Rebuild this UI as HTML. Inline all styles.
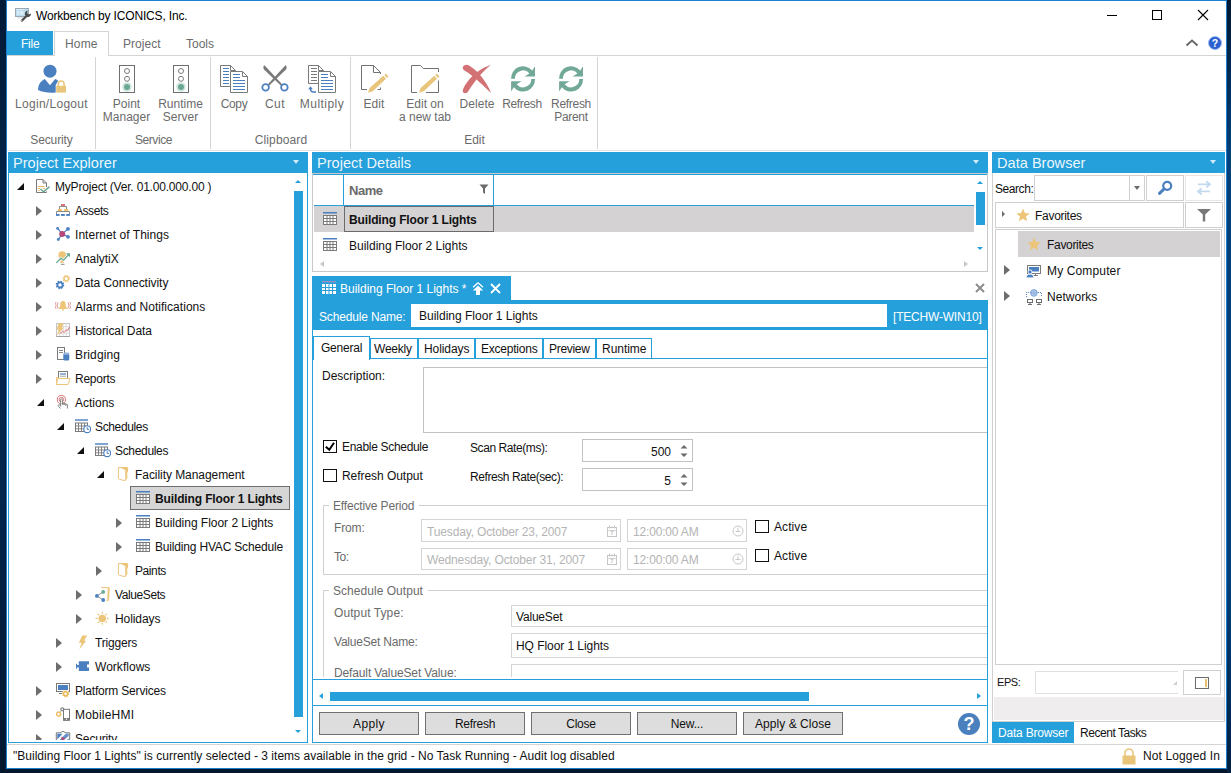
<!DOCTYPE html>
<html>
<head>
<meta charset="utf-8">
<title>Workbench</title>
<style>
*{box-sizing:border-box;margin:0;padding:0}
html,body{width:1231px;height:773px;overflow:hidden;background:#02162e;font-family:"Liberation Sans",sans-serif;font-size:12px;color:#111}
.a{position:absolute}
.t{position:absolute;white-space:nowrap;line-height:14px}
#win{position:absolute;left:6px;top:0;width:1221px;height:769px;background:#fff;border:1px solid #1c7fd0;overflow:hidden}
/* inside #win coordinates are offset: left -7, top -1 */
#o{position:absolute;left:-7px;top:-1px;width:1231px;height:773px}
.blue{background:#26a0da}
.rl{color:#6b6b6b;font-size:12px;text-align:center;line-height:13px}
.sep{position:absolute;width:1px;background:#d4d4d4;top:57px;height:92px}
.hdr{position:absolute;height:21px;top:152px;background:#26a0da;color:rgba(255,255,255,0.93);font-size:14.6px;line-height:23px;padding-left:5px;white-space:nowrap;overflow:hidden}
.dd{position:absolute;top:160px;width:0;height:0;border-left:3.5px solid transparent;border-right:3.5px solid transparent;border-top:4px solid #cfe9f7}
.pn{position:absolute;background:#fff;border:1px solid #26a0da}
.tr{position:absolute;white-space:nowrap;font-size:12px;line-height:14px;color:#111}
.ex{position:absolute;width:0;height:0;border-top:5px solid transparent;border-bottom:5px solid transparent;border-left:6px solid #6d6d6d}
.co{position:absolute;width:0;height:0;border-bottom:7px solid #111;border-left:7px solid transparent}
.btn{position:absolute;top:712px;height:23px;width:101px;background:#dddddd;border:1px solid #707070;text-align:center;font-size:12px;line-height:22px;color:#111}
.inp{position:absolute;background:#fff;border:1px solid #ababab}
.g{color:#6b6b6b}
</style>
</head>
<body>
<!--DEFS-->
<svg width="0" height="0" style="position:absolute">
<defs>
<symbol id="i-table" viewBox="0 0 16 16"><rect x="1" y="0" width="14" height="1.500" fill="#4a7fc0"/><rect x="1.500" y="3.500" width="13" height="9" fill="#fff" stroke="#7a7a7a"/><path d="M1.500 6.500H14.500M1.500 9.500H14.500M5 3.500V12.500M8 3.500V12.500M11 3.500V12.500" stroke="#7a7a7a" stroke-width="1"/></symbol>
<symbol id="i-tablew" viewBox="0 0 16 14"><rect x="1" y="0" width="14" height="1.300" fill="#9b8fc6"/><rect x="1" y="3" width="14" height="10" fill="#fff"/><path d="M1 6.500H15M1 9.500H15M4.500 3V13M8 3V13M11.500 3V13" stroke="#26a0da" stroke-width="1"/></symbol>
<symbol id="i-star" viewBox="0 0 14 14"><path d="M7 0.500L8.900 5L13.700 5.400L10 8.500L11.200 13.300L7 10.700L2.800 13.300L4 8.500L0.300 5.400L5.100 5Z" fill="#ecc579"/></symbol>
<symbol id="i-cal" viewBox="0 0 10 12"><rect x="0.500" y="2.500" width="9" height="9" fill="none" stroke="#c6c6c6"/><path d="M0.500 5.500H9.500" stroke="#d2d2d2"/><path d="M2.500 0.500V3.500M7.500 0.500V3.500M5 1.200V3.200" stroke="#c6c6c6"/><text x="5" y="10.300" font-size="6" font-weight="bold" fill="#c4c4c4" text-anchor="middle" font-family="Liberation Sans">7</text></symbol>
<symbol id="i-clk" viewBox="0 0 12 12"><circle cx="6" cy="6" r="5" fill="none" stroke="#c8c8c8"/><path d="M6 2.500V6.500M3.500 6.500H8.500" stroke="#c8c8c8" fill="none"/></symbol>
<symbol id="r-login" viewBox="0 0 32 32"><circle cx="14" cy="8.200" r="6.500" fill="#4a7fc0"/><path d="M2 27 C2.500 20.500 5 18 8.800 16 L14 22.300 L19.200 16 C20.500 16.500 21.500 17 22.200 17.800 L19.700 22 V29.400 C14 30 7 29.500 2 27Z" fill="#4a7fc0"/><path d="M22.300 23 V21 a2.900 2.900 0 0 1 5.800 0 V23" stroke="#e8c57a" stroke-width="1.500" fill="none"/><rect x="20.200" y="22.800" width="9.800" height="6.800" fill="#e8c57a"/></symbol>
<symbol id="r-light" viewBox="0 0 32 32"><rect x="8.500" y="2.500" width="15" height="27" fill="#fff" stroke="#6b6f6f" stroke-width="1"/><circle cx="16" cy="8" r="2.500" fill="#fff" stroke="#7a7a7a" stroke-width="1"/><circle cx="16" cy="15.800" r="2.500" fill="#fff" stroke="#7a7a7a" stroke-width="1"/><circle cx="16" cy="24" r="4.800" fill="#d3e6de"/><circle cx="16" cy="24" r="3" fill="#6aa893"/></symbol>
<symbol id="r-copy" viewBox="0 0 32 32"><path d="M2.500 2.500H12.500L17.500 7.500V23.500H2.500Z" fill="#fff" stroke="#7a7a7a"/><path d="M12.500 2.500V7.500H17.500" fill="none" stroke="#7a7a7a"/><path d="M5 5.500H11M5 8.500H11M5 11.500H11M5 14.500H11M5 17.500H11M5 20.500H11" stroke="#4a7fc0" stroke-width="1"/><path d="M12.500 8.500H24.500L29.500 13.500V29.500H12.500Z" fill="#fff" stroke="#7a7a7a"/><path d="M24.500 8.500V13.500H29.500" fill="none" stroke="#7a7a7a"/><path d="M15 11.500H22M15 14.500H22M15 17.500H27M15 20.500H27M15 23.500H27M15 26.500H27" stroke="#4a7fc0" stroke-width="1"/></symbol>
<symbol id="r-multiply" viewBox="0 0 32 32"><path d="M2.500 2.500H12.500L17.500 7.500V20.500H2.500Z" fill="#fff" stroke="#7a7a7a"/><path d="M12.500 2.500V7.500H17.500" fill="none" stroke="#7a7a7a"/><path d="M5 5.500H11M5 8.500H11M5 11.500H11M5 14.500H11M5 17.500H11" stroke="#7a7a7a" stroke-width="1"/><path d="M12.500 8.500H24.500L29.500 13.500V29.500H12.500Z" fill="#fff" stroke="#7a7a7a"/><path d="M24.500 8.500V13.500H29.500" fill="none" stroke="#7a7a7a"/><path d="M15 11.500H22M15 14.500H22M15 17.500H27M15 20.500H27M15 23.500H27M15 26.500H27" stroke="#4a7fc0" stroke-width="1"/><path d="M10 29H7.500A3 3 0 0 1 4.500 26V25" fill="none" stroke="#4a7fc0" stroke-width="1.400"/><path d="M2.200 26.300L4.500 23.300L6.800 26.300Z" fill="#4a7fc0"/></symbol>
<symbol id="r-cut" viewBox="0 0 32 32"><path d="M4.500 3.500C4.800 2.500 5.500 2.300 5.500 2.300L23.300 21.600L22 22.700L5 6.500C4.300 5.500 4.300 4.500 4.500 3.500Z" fill="#7a7a7a"/><path d="M27.500 3.500C27.200 2.500 26.500 2.300 26.500 2.300L8.700 21.600L10 22.700L27 6.500C27.700 5.500 27.700 4.500 27.500 3.500Z" fill="#7a7a7a"/><circle cx="6.600" cy="24.400" r="3.300" fill="#fff" stroke="#4a7fc0" stroke-width="1.700"/><circle cx="25.400" cy="24.400" r="3.300" fill="#fff" stroke="#4a7fc0" stroke-width="1.700"/></symbol>
<symbol id="r-edit" viewBox="0 0 32 32"><path d="M9 26.500H3.500V2.500H15.500L22.500 9.500V11M22.500 24.500V26.500H19.500" fill="none" stroke="#6e7272" stroke-width="1"/><path d="M15.500 2.500V9.500H22.500" fill="none" stroke="#6e7272"/><path d="M10 29.700L11.600 25L25.300 12.800L28 15.800L14.800 28.200Z" fill="#e8c57a"/><path d="M26.300 11.900L27.800 10.500L30.500 13.500L29 14.900Z" fill="#e8c57a"/></symbol>
<symbol id="r-edittab" viewBox="0 0 32 32"><path d="M8 29.500H2.500V2.500H11.500L14.300 5.500H29.500V9M29.500 17.500V29.500H17" fill="none" stroke="#6e7272" stroke-width="1"/><path d="M10 29.700L11.600 25L25.300 12.800L28 15.800L14.800 28.200Z" fill="#e8c57a"/><path d="M26.300 11.900L27.800 10.500L30.500 13.500L29 14.900Z" fill="#e8c57a"/></symbol>
<symbol id="r-delete" viewBox="0 0 32 32"><path d="M1.800 4.500C2.500 1.500 6 1.200 8.500 2.800C17 8 25 18 30.200 30C23 23.500 13 13 3.500 7.500C2.300 6.800 1.600 5.500 1.800 4.500Z" fill="#d37274"/><path d="M30 1.800C22 4.500 12.500 10.500 7 18C3.500 22.500 1.500 26.500 1.800 28.500C2.200 30.500 5 30.800 6.800 29C10.500 23.500 18.500 10.500 30 1.800Z" fill="#d37274"/></symbol>
<symbol id="r-refresh" viewBox="0 0 32 32"><path d="M4.100 15.800A12 12 0 0 1 25.300 7.600L28 3.200V13.600H17.600L22.500 10.500A8.300 8.300 0 0 0 7.800 15.800Z" fill="#72a898"/><path d="M28 16A12 12 0 0 1 6.800 24.200L4.100 28.600V18.200H14.500L9.600 21.300A8.300 8.300 0 0 0 24.300 16Z" fill="#72a898"/></symbol>
<symbol id="i-app" viewBox="0 0 20 18"><rect x="3" y="11" width="6" height="1.500" fill="#e4e8ec"/><rect x="1.500" y="2.500" width="13" height="8" fill="#b9dcf0" stroke="#9aa9b4" stroke-width="1"/><rect x="2.200" y="3.200" width="8" height="0.800" fill="#e4f1f9"/><rect x="3" y="5" width="2.200" height="3.800" fill="#dcecf6"/><rect x="6" y="5" width="3.600" height="3.800" fill="#dcecf6"/><path d="M7.800 14.700L13 9.500" stroke="#4d4d4d" stroke-width="2.300" stroke-linecap="round"/><circle cx="7.700" cy="14.800" r="0.600" fill="#fff"/><path d="M11 9C10.300 7 11.500 4.800 13.600 4.400L13.200 7.200L14.800 8.600L17 7.600C17.200 9.800 15.600 11.300 13.500 11.200Z" fill="#4d4d4d"/></symbol>
<symbol id="i-proj" viewBox="0 0 16 16"><path d="M1.500 0.500H8L11.500 4V8M11.500 12.500V13.500H1.500V0.500" fill="#fff" stroke="#7a7a7a"/><path d="M8 0.500V4H11.500" fill="none" stroke="#7a7a7a"/><path d="M3 7.500H9.500M3 9.500H5M8 9.500H10M3 11.500H4.500" stroke="#e8b860" stroke-width="1"/><path d="M5.400 10L8.600 12.800L14.500 7.600" fill="none" stroke="#6aa893" stroke-width="1.500"/></symbol>
<symbol id="i-assets" viewBox="0 0 16 16"><rect x="6" y="1.100" width="4" height="1.800" fill="#d9666b"/><path d="M4.500 6V3.500H11.500V6M1.500 11V8.500H14.500V11" fill="none" stroke="#8a8a8a"/><rect x="2.800" y="6.100" width="4" height="1.800" fill="#ecb957"/><rect x="9.200" y="6.100" width="4" height="1.800" fill="#ecb957"/><rect x="1" y="11" width="3.600" height="1.900" fill="#4a7fc0"/><rect x="6" y="11" width="3.800" height="1.900" fill="#4a7fc0"/><rect x="11.200" y="11" width="3.700" height="1.900" fill="#4a7fc0"/></symbol>
<symbol id="i-iot" viewBox="0 0 16 16"><path d="M2.600 1.400L7.200 6.900L13 1.900M7.200 6.900L13 9.800M7.200 6.900L3.300 12.500" stroke="#4a7fc0" stroke-width="1.200" fill="none"/><circle cx="2.600" cy="1.400" r="1.400" fill="#4a7fc0"/><circle cx="13" cy="1.900" r="1.900" fill="#4a7fc0"/><circle cx="13" cy="9.800" r="1.900" fill="#4a7fc0"/><circle cx="3.300" cy="12.500" r="1.400" fill="#4a7fc0"/><circle cx="7.200" cy="6.900" r="3" fill="#b5477a"/></symbol>
<symbol id="i-analytix" viewBox="0 0 16 16"><circle cx="7.200" cy="4" r="3.800" fill="#ecc579"/><path d="M5.300 6H9.100L8.800 12H5.600Z" fill="#ecc579"/><rect x="6" y="12.800" width="3.500" height="1" fill="#8a8a8a"/><path d="M1.300 11.900L5.900 7.200L8.600 9.200L13.800 3.200" fill="none" stroke="#fff" stroke-width="2.600"/><path d="M1.300 11.900L5.900 7.200L8.600 9.200L13.800 3.200" fill="none" stroke="#6aa893" stroke-width="1.300"/><path d="M11 2.300H15V6.300Z" fill="#6aa893"/></symbol>
<symbol id="i-datacon" viewBox="0 0 16 16"><circle cx="5" cy="9.900" r="2.600" fill="none" stroke="#4a7fc0" stroke-width="1.800"/><circle cx="5" cy="9.900" r="3.600" fill="none" stroke="#4a7fc0" stroke-width="1.400" stroke-dasharray="1.500 1.330"/><circle cx="11.300" cy="3.600" r="2.200" fill="none" stroke="#ecc579" stroke-width="1.300"/><circle cx="11.300" cy="3.600" r="3.100" fill="none" stroke="#ecc579" stroke-width="1.200" stroke-dasharray="1.300 1.130"/></symbol>
<symbol id="i-alarm" viewBox="0 0 16 16"><path d="M8 2C5.800 2 5.300 4 5.300 5.500C5.300 7.500 4.500 8.500 3.600 9.300V10H12.400V9.300C11.500 8.500 10.700 7.500 10.700 5.500C10.700 4 10.200 2 8 2Z" fill="#ecc579"/><rect x="7" y="10.300" width="2" height="1.200" fill="#ecc579"/><path d="M3.200 3.600C1.700 5.200 1.700 7.600 3.200 9.200M1.200 3C-0.600 5 -0.600 7.800 1.200 9.800M12.800 3.600C14.300 5.200 14.300 7.600 12.800 9.200M14.800 3C16.600 5 16.600 7.800 14.800 9.800" fill="none" stroke="#dd8386" stroke-width="1"/></symbol>
<symbol id="i-hist" viewBox="0 0 16 16"><rect x="1.500" y="0.500" width="13" height="13" fill="#fff" stroke="#c4c4c4"/><path d="M1.500 3.700H14.500M1.500 7H14.500M1.500 10.200H14.500M4.700 0.500V13.500M8 0.500V13.500M11.200 0.500V13.500" stroke="#d4d4d4" stroke-width="0.800"/><path d="M1.500 13.500H14.500" fill="none" stroke="#a0a0a0"/><path d="M3.800 0.300H8.800L6.500 4.500H9L1.800 12.600L4 6.500H1.600Z" fill="#ecc579"/><path d="M5 10.500L7.500 8.500L9.500 9.200L11.500 7L12.500 7.500L14.500 4" fill="none" stroke="#d9666b" stroke-width="0.900"/></symbol>
<symbol id="i-bridge" viewBox="0 0 16 16"><rect x="2.500" y="0.500" width="7" height="12" fill="#fff" stroke="#7a7a7a"/><path d="M4 3.500H8M4 5.500H8" stroke="#8a8a8a" stroke-width="1"/><rect x="8.300" y="6.500" width="6" height="7" rx="1.500" fill="#4a7fc0"/><ellipse cx="11.300" cy="6.800" rx="3" ry="1.200" fill="#8fb0dc"/></symbol>
<symbol id="i-reports" viewBox="0 0 16 16"><rect x="3.500" y="0.500" width="9" height="8" fill="#fff" stroke="#7a7a7a"/><path d="M5 3H11" stroke="#4a7fc0" stroke-width="1.200"/><path d="M5 5.200H11" stroke="#9a9a9a" stroke-width="0.900"/><path d="M1.500 13.500V6.500H3.500" fill="none" stroke="#ecc579"/><path d="M3 7.500H15L13 13.500H1.200Z" fill="#fff" stroke="#ecc579" stroke-width="1"/></symbol>
<symbol id="i-actions" viewBox="0 0 16 16"><circle cx="6.400" cy="4.600" r="4.100" fill="none" stroke="#d9666b" stroke-width="0.900"/><circle cx="6.400" cy="4.600" r="2.200" fill="none" stroke="#d9666b" stroke-width="0.900"/><path d="M5.600 11.500V4.800a0.900 0.900 0 0 1 1.800 0V9.500" fill="#fff" stroke="#7a7a7a" stroke-width="0.900"/><path d="M7.400 9.800V8.600a0.800 0.800 0 0 1 1.700 0V10M9.100 10V9.300a0.800 0.800 0 0 1 1.700 0V10.500M10.800 10.500V10a0.800 0.800 0 0 1 1.600 0V13.500M5.600 10.500L4.200 9.800C3.300 9.500 2.700 10.600 3.500 11.300L5.500 13.500" fill="none" stroke="#7a7a7a" stroke-width="0.900"/></symbol>
<symbol id="i-sched" viewBox="0 0 16 16"><rect x="0" y="0.300" width="13" height="1.400" fill="#4a7fc0"/><rect x="0.500" y="4" width="12" height="8.500" fill="#fff" stroke="#7a7a7a"/><path d="M0.500 7H12.500M0.500 9.800H12.500M3.500 4V12.500M6.500 4V12.500M9.500 4V12.500" stroke="#7a7a7a" stroke-width="0.900"/><circle cx="12.200" cy="10.200" r="3.400" fill="#fff" stroke="#4a7fc0" stroke-width="1.100"/><path d="M12.200 8.200V10.400H14" fill="none" stroke="#4a7fc0" stroke-width="1"/></symbol>
<symbol id="i-folder" viewBox="0 0 16 16"><path d="M3.400 0.500H12.600V4.700H11.800V11.600L10.600 12V13.400L7.500 13.200L4.600 12.300L3.400 11.600Z" fill="#fff" stroke="#ecc579" stroke-width="1"/><path d="M6.500 0.500H12.600V4.700H11.800V11.600L10.200 12V3.400L9 2.200L6.500 1.600Z" fill="#ecc579"/></symbol>
<symbol id="i-valueset" viewBox="0 0 16 16"><path d="M5.900 0.600H14.200L13.600 13.200L11.800 13.800L12 12.700" fill="none" stroke="#ecc579" stroke-width="1"/><path d="M12.800 0.800L12.200 12.800L13.500 13L14.100 0.800Z" fill="#ecc579"/><path d="M8.200 4.900L1.900 8.900L8.200 13" fill="none" stroke="#8a8a8a" stroke-width="0.900"/><circle cx="1.900" cy="8.900" r="1.900" fill="#4a7fc0"/><circle cx="8.200" cy="4.900" r="1.900" fill="#6aa893"/><circle cx="8.200" cy="13" r="1.900" fill="#4a7fc0"/></symbol>
<symbol id="i-holiday" viewBox="0 0 16 16"><circle cx="7.300" cy="7.400" r="3.700" fill="#ecc579"/><path d="M7.300 0L8.100 2.800H6.500ZM7.300 14.800L8.100 12H6.500ZM-0.100 7.400L2.700 6.600V8.200ZM14.700 7.400L11.900 6.600V8.200ZM2.100 2.200L4.700 3.600L3.500 4.800ZM12.500 2.200L9.900 3.600L11.100 4.800ZM2.100 12.600L4.700 11.200L3.500 10ZM12.500 12.600L9.900 11.200L11.100 10Z" fill="#ecc579"/></symbol>
<symbol id="i-trigger" viewBox="0 0 16 16"><path d="M7.300 0.400H12.200L9 5.800H11.300L4.300 14.300L6.700 7.700H3.800Z" fill="#ecc579"/></symbol>
<symbol id="i-workflow" viewBox="0 0 16 16"><path d="M3.800 2.200H14V5.500H12V8.500H14V12H3.800Z" fill="#4a7fc0"/><rect x="1.200" y="6" width="3" height="2.400" fill="#4a7fc0"/><rect x="1" y="4.800" width="1" height="4.800" fill="#4a7fc0"/></symbol>
<symbol id="i-platform" viewBox="0 0 16 16"><rect x="1.500" y="0.500" width="13" height="8" fill="#fff" stroke="#7a7a7a"/><rect x="3" y="2" width="10" height="5" fill="#4a7fc0"/><path d="M4 10.500H7" stroke="#7a7a7a"/><circle cx="10.600" cy="10.800" r="3.600" fill="#fff"/><circle cx="10.600" cy="10.800" r="2" fill="none" stroke="#ecb957" stroke-width="1.400"/><circle cx="10.600" cy="10.800" r="3" fill="none" stroke="#ecb957" stroke-width="1.200" stroke-dasharray="1.200 1.150"/></symbol>
<symbol id="i-mobile" viewBox="0 0 16 16"><circle cx="7.300" cy="2.300" r="1.500" fill="#fff" stroke="#8a8a8a" stroke-width="1.300"/><path d="M5.600 3.800L4.800 5" stroke="#b0b0b0" stroke-width="0.900"/><rect x="8.500" y="2.300" width="6" height="11" fill="#fff" stroke="#7a7a7a"/><rect x="8.500" y="11" width="6" height="2.500" fill="#7a7a7a"/><circle cx="11.500" cy="12.200" r="0.700" fill="#fff"/><circle cx="3.600" cy="7.100" r="2" fill="#fff" stroke="#ecb957" stroke-width="1.200"/><path d="M3.600 4.300V5M3.600 9.200V9.900M0.800 7.100H1.500M5.700 7.100H6.400" stroke="#ecb957" stroke-width="1"/></symbol>
<symbol id="i-security" viewBox="0 0 16 16"><path d="M8 0.300C6 1.800 3.500 2 1.300 1.800V8C1.300 12 5 14.500 8 15.500C11 14.500 14.700 12 14.700 8V1.800C12.500 2 10 1.800 8 0.300Z" fill="#fff" stroke="#7a7a7a" stroke-width="1"/><path d="M2.300 2.800H7.500L2.300 8.500Z" fill="#4a7fc0"/><path d="M11 2.600L13.700 2.800V5L4.500 12.500L3 10.500Z" fill="#4a7fc0" opacity="0.850"/><path d="M13.700 7.500V9L10 12.500H8Z" fill="#4a7fc0"/><path d="M6.500 5.500L10.500 7.800L6.500 10Z" fill="#b5477a"/></symbol>
<symbol id="i-mycomp" viewBox="0 0 16 16"><rect x="1.500" y="1.500" width="13" height="8" fill="#fff" stroke="#7a7a7a"/><rect x="3" y="3" width="10" height="4.500" fill="#4a7fc0"/><path d="M9.500 9.500V11.500M7.500 11.500H12" stroke="#7a7a7a"/><circle cx="4" cy="7.900" r="2.400" fill="#fff"/><circle cx="4" cy="8" r="1.700" fill="#4a7fc0"/><path d="M0.300 13.700C0.300 11 2 10.200 4 10.200C6 10.200 7.700 11 7.700 13.700Z" fill="#4a7fc0" stroke="#fff" stroke-width="0.600"/></symbol>
<symbol id="i-network" viewBox="0 0 16 16"><path d="M0.600 8V3.500H15.600V8" fill="none" stroke="#4a7fc0" stroke-width="1" stroke-dasharray="1 1"/><circle cx="7.900" cy="3.900" r="3.400" fill="#b7cdec" stroke="#7ea3d8" stroke-width="0.800"/><path d="M4.600 3.900H11.200M7.900 0.600V7.200M6.200 1.100C5.500 2.900 5.500 4.900 6.200 6.700M9.600 1.100C10.300 2.900 10.300 4.900 9.600 6.700" stroke="#7ea3d8" stroke-width="0.600" fill="none"/><rect x="1.500" y="10.500" width="5" height="3" fill="#fff" stroke="#6e6e6e"/><rect x="10.500" y="10.500" width="5" height="3" fill="#fff" stroke="#6e6e6e"/><path d="M4 13.500V15.500M13 13.500V15.500M2 15.500H6M11 15.500H15" stroke="#6e6e6e"/></symbol>
</defs>
</svg>
<!--/DEFS-->
<div class="a" style="left:0;top:0;width:6px;height:773px;background:linear-gradient(to bottom,#021a36 0%,#032850 35%,#03264c 65%,#02162e 100%)"></div>
<div class="a" style="left:5px;top:0;width:1px;height:773px;background:#021c3a"></div>
<div class="a" style="left:1227px;top:0;width:4px;height:773px;background:linear-gradient(to bottom,#02182f 0%,#04407a 20%,#04407a 75%,#02203f 100%)"></div>
<div id="win"><div id="o">

<!-- TITLE BAR -->
<div class="t" style="left:36px;top:9px;font-size:12px;color:#000;letter-spacing:-0.17px">Workbench by ICONICS, Inc.</div>

<!-- RIBBON TABS -->
<div class="a blue" style="left:7px;top:31px;width:46px;height:24px"></div>
<div class="t" style="left:21px;top:37px;color:#fff;font-size:12px;letter-spacing:-0.25px">File</div>
<div class="a" style="left:7px;top:55px;width:1220px;height:1px;background:#d4d4d4"></div>
<div class="a" style="left:54px;top:31px;width:55px;height:25px;background:#fff;border:1px solid #d4d4d4;border-bottom:none"></div>
<div class="t g" style="left:65px;top:37px;font-size:12px;letter-spacing:0.16px">Home</div>
<div class="t g" style="left:123px;top:37px;font-size:12px;letter-spacing:0.04px">Project</div>
<div class="t g" style="left:186px;top:37px;font-size:12px;letter-spacing:-0.0px">Tools</div>

<!--RIB-->
<!-- window controls -->
<div class="a" style="left:1107px;top:15px;width:10px;height:1px;background:#000"></div>
<div class="a" style="left:1152px;top:10px;width:10px;height:10px;border:1px solid #000"></div>
<svg class="a" style="left:1197px;top:9px" width="12" height="12" viewBox="0 0 12 12"><path d="M1 1L11 11M11 1L1 11" stroke="#000" stroke-width="1.1" fill="none"/></svg>
<svg class="a" style="left:1185px;top:39px" width="14" height="8" viewBox="0 0 14 8"><path d="M1.500 6.500L7 1.500L12.500 6.500" stroke="#6b6b6b" stroke-width="2" fill="none"/></svg>
<svg class="a" style="left:1208px;top:36px" width="14" height="14" viewBox="0 0 14 14"><circle cx="7" cy="7" r="6.500" fill="#2a5fd0" stroke="#9db8ee" stroke-width="1"/><text x="7" y="11" font-family="Liberation Sans" font-size="10.500" font-weight="bold" fill="#fff" text-anchor="middle">?</text></svg>
<svg class="a" style="left:14px;top:6px" width="20" height="18" viewBox="0 0 20 18"><use href="#i-app"/></svg>
<!-- ribbon buttons -->
<svg class="a" style="left:36px;top:63px" width="32" height="32" viewBox="0 0 32 32"><use href="#r-login"/></svg>
<div class="t rl" style="left:7px;top:98px;width:89px;letter-spacing:0.29px">Login/Logout</div>
<div class="t rl" style="left:7px;top:134px;width:89px;letter-spacing:-0.11px">Security</div>
<svg class="a" style="left:111px;top:63px" width="32" height="32" viewBox="0 0 32 32"><use href="#r-light"/></svg>
<div class="t rl" style="left:96px;top:98px;width:61px">Point<br>Manager</div>
<svg class="a" style="left:165px;top:63px" width="32" height="32" viewBox="0 0 32 32"><use href="#r-light"/></svg>
<div class="t rl" style="left:150px;top:98px;width:61px">Runtime<br>Server</div>
<div class="t rl" style="left:96px;top:134px;width:115px;letter-spacing:-0.4px">Service</div>
<svg class="a" style="left:218px;top:63px" width="32" height="32" viewBox="0 0 32 32"><use href="#r-copy"/></svg>
<div class="t rl" style="left:211px;top:98px;width:46px;letter-spacing:-0.34px">Copy</div>
<svg class="a" style="left:259px;top:63px" width="32" height="32" viewBox="0 0 32 32"><use href="#r-cut"/></svg>
<div class="t rl" style="left:252px;top:98px;width:46px;letter-spacing:0.45px">Cut</div>
<svg class="a" style="left:306px;top:63px" width="32" height="32" viewBox="0 0 32 32"><use href="#r-multiply"/></svg>
<div class="t rl" style="left:292px;top:98px;width:60px;letter-spacing:0.45px">Multiply</div>
<div class="t rl" style="left:211px;top:134px;width:140px;letter-spacing:0.12px">Clipboard</div>
<svg class="a" style="left:358px;top:63px" width="32" height="32" viewBox="0 0 32 32"><use href="#r-edit"/></svg>
<div class="t rl" style="left:351px;top:98px;width:46px;letter-spacing:0.1px">Edit</div>
<svg class="a" style="left:409px;top:63px" width="32" height="32" viewBox="0 0 32 32"><use href="#r-edittab"/></svg>
<div class="t rl" style="left:392px;top:98px;width:66px">Edit on<br>a new tab</div>
<svg class="a" style="left:461px;top:63px" width="32" height="32" viewBox="0 0 32 32"><use href="#r-delete"/></svg>
<div class="t rl" style="left:452px;top:98px;width:50px;letter-spacing:0.06px">Delete</div>
<svg class="a" style="left:507px;top:63px" width="32" height="32" viewBox="0 0 32 32"><use href="#r-refresh"/></svg>
<div class="t rl" style="left:495px;top:98px;width:54px;letter-spacing:-0.34px">Refresh</div>
<svg class="a" style="left:555px;top:63px" width="32" height="32" viewBox="0 0 32 32"><use href="#r-refresh"/></svg>
<div class="t rl" style="left:543px;top:98px;width:56px;letter-spacing:-0.3px">Refresh<br>Parent</div>
<div class="t rl" style="left:351px;top:134px;width:247px;letter-spacing:0.0px">Edit</div>
<!--/RIB-->
<!-- RIBBON -->
<div class="sep" style="left:95px"></div>
<div class="sep" style="left:210px"></div>
<div class="sep" style="left:350px"></div>
<div class="sep" style="left:597px"></div>
<div class="a" style="left:7px;top:150px;width:1220px;height:1px;background:#e4e4e4"></div>

<!-- PANEL HEADERS -->
<div class="hdr" style="left:8px;width:300px">Project Explorer</div>
<div class="hdr" style="left:312px;width:676px">Project Details</div>
<div class="hdr" style="left:992px;width:233px">Data Browser</div>
<div class="dd" style="left:293px"></div><div class="dd" style="left:973px"></div><div class="dd" style="left:1210px"></div>

<!--TREE-->
<!-- PROJECT EXPLORER -->
<div class="pn" style="left:8px;top:173px;width:300px;height:570px;overflow:hidden;border-top:none"><div class="a" style="left:-9px;top:-173px;width:320px;height:760px">
<div class="co" style="left:17px;top:183px"></div>
<svg class="a" style="left:35px;top:179px" width="16" height="16" viewBox="0 0 16 16"><use href="#i-proj"/></svg>
<div class="tr" style="left:55px;top:180px;letter-spacing:-0.19px">MyProject (Ver. 01.00.000.00 )</div>
<div class="ex" style="left:36px;top:206px"></div>
<svg class="a" style="left:55px;top:203px" width="16" height="16" viewBox="0 0 16 16"><use href="#i-assets"/></svg>
<div class="tr" style="left:75px;top:204px;letter-spacing:-0.45px">Assets</div>
<div class="ex" style="left:36px;top:230px"></div>
<svg class="a" style="left:55px;top:227px" width="16" height="16" viewBox="0 0 16 16"><use href="#i-iot"/></svg>
<div class="tr" style="left:75px;top:228px;letter-spacing:0.05px">Internet of Things</div>
<div class="ex" style="left:36px;top:254px"></div>
<svg class="a" style="left:55px;top:251px" width="16" height="16" viewBox="0 0 16 16"><use href="#i-analytix"/></svg>
<div class="tr" style="left:75px;top:252px;letter-spacing:-0.05px">AnalytiX</div>
<div class="ex" style="left:36px;top:278px"></div>
<svg class="a" style="left:55px;top:275px" width="16" height="16" viewBox="0 0 16 16"><use href="#i-datacon"/></svg>
<div class="tr" style="left:75px;top:276px;letter-spacing:-0.04px">Data Connectivity</div>
<div class="ex" style="left:36px;top:302px"></div>
<svg class="a" style="left:55px;top:299px" width="16" height="16" viewBox="0 0 16 16"><use href="#i-alarm"/></svg>
<div class="tr" style="left:75px;top:300px;letter-spacing:0.04px">Alarms and Notifications</div>
<div class="ex" style="left:36px;top:326px"></div>
<svg class="a" style="left:55px;top:323px" width="16" height="16" viewBox="0 0 16 16"><use href="#i-hist"/></svg>
<div class="tr" style="left:75px;top:324px;letter-spacing:-0.08px">Historical Data</div>
<div class="ex" style="left:36px;top:350px"></div>
<svg class="a" style="left:55px;top:347px" width="16" height="16" viewBox="0 0 16 16"><use href="#i-bridge"/></svg>
<div class="tr" style="left:75px;top:348px;letter-spacing:0.14px">Bridging</div>
<div class="ex" style="left:36px;top:374px"></div>
<svg class="a" style="left:55px;top:371px" width="16" height="16" viewBox="0 0 16 16"><use href="#i-reports"/></svg>
<div class="tr" style="left:75px;top:372px;letter-spacing:-0.26px">Reports</div>
<div class="co" style="left:37px;top:399px"></div>
<svg class="a" style="left:55px;top:395px" width="16" height="16" viewBox="0 0 16 16"><use href="#i-actions"/></svg>
<div class="tr" style="left:75px;top:396px;letter-spacing:-0.01px">Actions</div>
<div class="co" style="left:57px;top:423px"></div>
<svg class="a" style="left:75px;top:419px" width="16" height="16" viewBox="0 0 16 16"><use href="#i-sched"/></svg>
<div class="tr" style="left:95px;top:420px;letter-spacing:-0.36px">Schedules</div>
<div class="co" style="left:77px;top:447px"></div>
<svg class="a" style="left:95px;top:443px" width="16" height="16" viewBox="0 0 16 16"><use href="#i-sched"/></svg>
<div class="tr" style="left:115px;top:444px;letter-spacing:-0.33px">Schedules</div>
<div class="co" style="left:97px;top:471px"></div>
<svg class="a" style="left:115px;top:467px" width="16" height="16" viewBox="0 0 16 16"><use href="#i-folder"/></svg>
<div class="tr" style="left:135px;top:468px;letter-spacing:-0.06px">Facility Management</div>
<div class="a" style="left:130px;top:486px;width:160px;height:24px;background:#d6d6d6;border:1px solid #6e6e6e"></div>
<svg class="a" style="left:135px;top:491px" width="16" height="16" viewBox="0 0 16 16"><use href="#i-table"/></svg>
<div class="tr" style="left:155px;top:492px;font-weight:bold;letter-spacing:-0.13px">Building Floor 1 Lights</div>
<div class="ex" style="left:116px;top:518px"></div>
<svg class="a" style="left:135px;top:515px" width="16" height="16" viewBox="0 0 16 16"><use href="#i-table"/></svg>
<div class="tr" style="left:155px;top:516px;letter-spacing:-0.02px">Building Floor 2 Lights</div>
<div class="ex" style="left:116px;top:542px"></div>
<svg class="a" style="left:135px;top:539px" width="16" height="16" viewBox="0 0 16 16"><use href="#i-table"/></svg>
<div class="tr" style="left:155px;top:540px;letter-spacing:-0.18px">Building HVAC Schedule</div>
<div class="ex" style="left:96px;top:566px"></div>
<svg class="a" style="left:115px;top:563px" width="16" height="16" viewBox="0 0 16 16"><use href="#i-folder"/></svg>
<div class="tr" style="left:135px;top:564px;letter-spacing:-0.41px">Paints</div>
<div class="ex" style="left:76px;top:590px"></div>
<svg class="a" style="left:95px;top:587px" width="16" height="16" viewBox="0 0 16 16"><use href="#i-valueset"/></svg>
<div class="tr" style="left:115px;top:588px;letter-spacing:-0.4px">ValueSets</div>
<div class="ex" style="left:76px;top:614px"></div>
<svg class="a" style="left:95px;top:611px" width="16" height="16" viewBox="0 0 16 16"><use href="#i-holiday"/></svg>
<div class="tr" style="left:115px;top:612px;letter-spacing:-0.08px">Holidays</div>
<div class="ex" style="left:56px;top:638px"></div>
<svg class="a" style="left:75px;top:635px" width="16" height="16" viewBox="0 0 16 16"><use href="#i-trigger"/></svg>
<div class="tr" style="left:95px;top:636px;letter-spacing:-0.18px">Triggers</div>
<div class="ex" style="left:56px;top:662px"></div>
<svg class="a" style="left:75px;top:659px" width="16" height="16" viewBox="0 0 16 16"><use href="#i-workflow"/></svg>
<div class="tr" style="left:95px;top:660px;letter-spacing:0.03px">Workflows</div>
<div class="ex" style="left:36px;top:686px"></div>
<svg class="a" style="left:55px;top:683px" width="16" height="16" viewBox="0 0 16 16"><use href="#i-platform"/></svg>
<div class="tr" style="left:75px;top:684px;letter-spacing:-0.19px">Platform Services</div>
<div class="ex" style="left:36px;top:710px"></div>
<svg class="a" style="left:55px;top:707px" width="16" height="16" viewBox="0 0 16 16"><use href="#i-mobile"/></svg>
<div class="tr" style="left:75px;top:708px;letter-spacing:0.21px">MobileHMI</div>
<div class="ex" style="left:36px;top:734px"></div>
<svg class="a" style="left:55px;top:731px" width="16" height="16" viewBox="0 0 16 16"><use href="#i-security"/></svg>
<div class="tr" style="left:75px;top:732px;letter-spacing:-0.15px">Security</div>
<div class="a" style="left:9px;top:740px;width:298px;height:3px;background:#fff"></div>
<div class="a blue" style="left:294px;top:191px;width:9px;height:526px"></div>
<div class="a" style="left:295px;top:180px;width:0;height:0;border-left:3px solid transparent;border-right:3px solid transparent;border-bottom:3px solid #26a0da"></div>
<div class="a" style="left:295px;top:730px;width:0;height:0;border-left:3px solid transparent;border-right:3px solid transparent;border-top:3px solid #26a0da"></div>
</div></div>
<!--/TREE-->
<!--MID-->
<!-- PROJECT DETAILS -->
<div class="a" style="left:312px;top:276px;width:1px;height:467px;background:#26a0da"></div>
<div class="a" style="left:312px;top:742px;width:676px;height:1px;background:#26a0da"></div>
<!-- grid -->
<div class="a" style="left:312px;top:173px;width:676px;height:99px;border:1px solid #c8c8c8"></div>
<div class="a" style="left:313px;top:174px;width:674px;height:1px;background:#26a0da"></div>
<div class="a" style="left:343px;top:175px;width:1px;height:31px;background:#26a0da"></div>
<div class="a" style="left:493px;top:175px;width:1px;height:31px;background:#26a0da"></div>
<div class="a" style="left:314px;top:205px;width:660px;height:1px;background:#26a0da"></div>
<div class="t" style="left:349px;top:184px;font-weight:bold;font-size:13px;color:#6b6b6b;letter-spacing:-0.44px">Name</div>
<svg class="a" style="left:479px;top:184px" width="10" height="11" viewBox="0 0 10 11"><path d="M0.5 0.5H9.5L6 4.5V10L4 8.5V4.5Z" fill="#6b6b6b"/></svg>
<div class="a" style="left:314px;top:206px;width:660px;height:26px;background:#d4d2d3"></div>
<div class="a" style="left:344px;top:206px;width:150px;height:26px;border:1px solid #6b6b6b"></div>
<svg class="a" style="left:322px;top:212px" width="16" height="16" viewBox="0 0 16 16"><use href="#i-table"/></svg>
<div class="t" style="left:349px;top:213px;font-weight:bold;font-size:12px;letter-spacing:-0.13px">Building Floor 1 Lights</div>
<svg class="a" style="left:322px;top:238px" width="16" height="16" viewBox="0 0 16 16"><use href="#i-table"/></svg>
<div class="t" style="left:349px;top:239px;font-size:12px;letter-spacing:-0.01px">Building Floor 2 Lights</div>
<!-- grid scrollbars -->
<div class="a blue" style="left:976px;top:192px;width:9px;height:33px"></div>
<div class="a" style="left:977px;top:181px;width:0;height:0;border-left:3px solid transparent;border-right:3px solid transparent;border-bottom:3px solid #26a0da"></div>
<div class="a" style="left:977px;top:247px;width:0;height:0;border-left:3px solid transparent;border-right:3px solid transparent;border-top:3px solid #26a0da"></div>
<div class="a" style="left:320px;top:261px;width:0;height:0;border-top:3px solid transparent;border-bottom:3px solid transparent;border-right:4px solid #c8c8c8"></div>
<div class="a" style="left:964px;top:261px;width:0;height:0;border-top:3px solid transparent;border-bottom:3px solid transparent;border-left:4px solid #c8c8c8"></div>
<!-- document tab -->
<div class="a blue" style="left:312px;top:276px;width:199px;height:25px"></div>
<div class="a blue" style="left:312px;top:300px;width:676px;height:30px"></div>
<svg class="a" style="left:321px;top:281px" width="16" height="14" viewBox="0 0 16 14"><use href="#i-tablew"/></svg>
<div class="t" style="left:340px;top:282px;font-size:12px;color:#fff;letter-spacing:-0.01px">Building Floor 1 Lights *</div>
<svg class="a" style="left:472px;top:282px" width="12" height="13" viewBox="0 0 12 13"><path d="M6 0.8L1 5.2M6 0.8L11 5.2" stroke="#fff" stroke-width="1.3" fill="none"/><path d="M6 3.6L0.8 8.6H4V13H8V8.6H11.2Z" fill="#fff"/></svg>
<svg class="a" style="left:490px;top:283px" width="11" height="11" viewBox="0 0 11 11"><path d="M1 1L10 10M10 1L1 10" stroke="#fff" stroke-width="1.8" fill="none"/></svg>
<svg class="a" style="left:975px;top:283px" width="10" height="10" viewBox="0 0 10 10"><path d="M1 1L9 9M9 1L1 9" stroke="#8c8c8c" stroke-width="2" fill="none"/></svg>
<div class="t" style="left:319px;top:310px;font-size:12px;color:#fff;letter-spacing:-0.16px">Schedule Name:</div>
<div class="a" style="left:411px;top:304px;width:476px;height:23px;background:#fff"></div>
<div class="t" style="left:419px;top:309px;font-size:12px;letter-spacing:0.0px">Building Floor 1 Lights</div>
<div class="t" style="left:893px;top:310px;font-size:12px;color:#fff;letter-spacing:-0.2px">[TECHW-WIN10]</div>
<!-- inner tabs -->
<div class="a" style="left:313px;top:358px;width:675px;height:1px;background:#26a0da"></div>
<div class="a" style="left:370px;top:338px;width:48px;height:21px;border:1px solid #26a0da"></div>
<div class="a" style="left:418px;top:338px;width:57px;height:21px;border:1px solid #26a0da"></div>
<div class="a" style="left:475px;top:338px;width:68px;height:21px;border:1px solid #26a0da"></div>
<div class="a" style="left:543px;top:338px;width:53px;height:21px;border:1px solid #26a0da"></div>
<div class="a" style="left:596px;top:338px;width:56px;height:21px;border:1px solid #26a0da"></div>
<div class="a" style="left:313px;top:336px;width:57px;height:24px;background:#fff;border:1px solid #26a0da;border-bottom:none"></div>
<div class="t" style="left:321px;top:341px;font-size:12px;letter-spacing:-0.23px">General</div>
<div class="t" style="left:374px;top:342px;font-size:12px;letter-spacing:-0.23px">Weekly</div>
<div class="t" style="left:424px;top:342px;font-size:12px;letter-spacing:-0.08px">Holidays</div>
<div class="t" style="left:481px;top:342px;font-size:12px;letter-spacing:-0.23px">Exceptions</div>
<div class="t" style="left:549px;top:342px;font-size:12px;letter-spacing:-0.3px">Preview</div>
<div class="t" style="left:602px;top:342px;font-size:12px;letter-spacing:-0.03px">Runtime</div>
<!-- form -->
<div class="t" style="left:322px;top:369px;font-size:12px;letter-spacing:-0.03px">Description:</div>
<div class="a" style="left:423px;top:367px;width:570px;height:66px;border:1px solid #c2c2c2;border-right:none"></div>
<div class="a" style="left:323px;top:440px;width:14px;height:13px;border:1px solid #111;background:#fff"></div>
<svg class="a" style="left:324px;top:441px" width="11" height="11" viewBox="0 0 11 11"><path d="M1.800 5.800L5.300 8.800L10 1.800" stroke="#000" stroke-width="2" fill="none"/></svg>
<div class="t" style="left:342px;top:440px;font-size:12px;letter-spacing:-0.31px">Enable Schedule</div>
<div class="t" style="left:470px;top:441px;font-size:12px;letter-spacing:-0.42px">Scan Rate(ms):</div>
<div class="inp" style="left:582px;top:439px;width:111px;height:23px;border-color:#c2c2c2"></div>
<div class="t" style="left:600px;top:445px;width:71px;text-align:right;font-size:12px">500</div>
<div class="a" style="left:323px;top:469px;width:14px;height:13px;border:1px solid #111;background:#fff"></div>
<div class="t" style="left:342px;top:469px;font-size:12px;letter-spacing:-0.05px">Refresh Output</div>
<div class="t" style="left:470px;top:470px;font-size:12px;letter-spacing:-0.42px">Refresh Rate(sec):</div>
<div class="inp" style="left:582px;top:468px;width:111px;height:23px;border-color:#c2c2c2"></div>
<div class="t" style="left:600px;top:474px;width:71px;text-align:right;font-size:12px">5</div>
<svg class="a" style="left:680px;top:444px" width="8" height="14" viewBox="0 0 8 14"><path d="M0.5 4.5L4 1L7.5 4.5Z M0.5 9.5L4 13L7.5 9.5Z" fill="#6b6b6b"/></svg>
<svg class="a" style="left:680px;top:473px" width="8" height="14" viewBox="0 0 8 14"><path d="M0.5 4.5L4 1L7.5 4.5Z M0.5 9.5L4 13L7.5 9.5Z" fill="#6b6b6b"/></svg>
<!-- Effective Period -->
<div class="a" style="left:323px;top:505px;width:670px;height:70px;border:1px solid #d0d0d0;border-right:none"></div>
<div class="t g" style="left:329px;top:499px;font-size:12px;background:#fff;padding:0 5px 0 4px;letter-spacing:-0.16px">Effective Period</div>
<div class="t g" style="left:334px;top:521px;font-size:12px;letter-spacing:-0.14px">From:</div>
<div class="t g" style="left:334px;top:550px;font-size:12px;letter-spacing:-0.41px">To:</div>
<div class="inp" style="left:421px;top:519px;width:200px;height:23px;border-color:#d4d4d4"></div>
<div class="inp" style="left:421px;top:548px;width:200px;height:22px;border-color:#d4d4d4"></div>
<div class="inp" style="left:627px;top:519px;width:120px;height:23px;border-color:#d4d4d4"></div>
<div class="inp" style="left:627px;top:548px;width:120px;height:22px;border-color:#d4d4d4"></div>
<div class="t" style="left:427px;top:525px;font-size:12px;color:#b4b4b4;letter-spacing:-0.15px">Tuesday, October 23, 2007</div>
<div class="t" style="left:427px;top:553px;font-size:12px;color:#b4b4b4;letter-spacing:-0.13px">Wednesday, October 31, 2007</div>
<div class="t" style="left:633px;top:525px;font-size:12px;color:#b4b4b4;letter-spacing:-0.17px">12:00:00 AM</div>
<div class="t" style="left:633px;top:553px;font-size:12px;color:#b4b4b4;letter-spacing:-0.17px">12:00:00 AM</div>
<svg class="a" style="left:607px;top:525px" width="10" height="12" viewBox="0 0 10 12"><use href="#i-cal"/></svg>
<svg class="a" style="left:607px;top:553px" width="10" height="12" viewBox="0 0 10 12"><use href="#i-cal"/></svg>
<svg class="a" style="left:732px;top:525px" width="12" height="12" viewBox="0 0 12 12"><use href="#i-clk"/></svg>
<svg class="a" style="left:732px;top:553px" width="12" height="12" viewBox="0 0 12 12"><use href="#i-clk"/></svg>
<div class="a" style="left:755px;top:520px;width:14px;height:13px;border:1px solid #111;background:#fff"></div>
<div class="a" style="left:755px;top:549px;width:14px;height:13px;border:1px solid #111;background:#fff"></div>
<div class="t" style="left:774px;top:520px;font-size:12px;letter-spacing:0.08px">Active</div>
<div class="t" style="left:774px;top:549px;font-size:12px;letter-spacing:0.08px">Active</div>
<!-- Schedule Output -->
<div class="a" style="left:313px;top:585px;width:674px;height:92px;overflow:hidden">
<div class="a" style="left:10px;top:5px;width:670px;height:120px;border:1px solid #d0d0d0;border-right:none"></div>
<div class="t g" style="left:16px;top:-1px;font-size:12px;background:#fff;padding:0 5px 0 4px;letter-spacing:0.04px">Schedule Output</div>
<div class="t g" style="left:21px;top:21px;font-size:12px;letter-spacing:0.09px">Output Type:</div>
<div class="t g" style="left:21px;top:50px;font-size:12px;letter-spacing:-0.21px">ValueSet Name:</div>
<div class="t g" style="left:21px;top:81px;font-size:12px;letter-spacing:-0.13px">Default ValueSet Value:</div>
<div class="inp" style="left:198px;top:20px;width:490px;height:22px;border-color:#d4d4d4"></div>
<div class="inp" style="left:198px;top:48px;width:490px;height:25px;border-color:#d4d4d4"></div>
<div class="inp" style="left:198px;top:79px;width:490px;height:25px;border-color:#d4d4d4"></div>
<div class="t" style="left:203px;top:25px;font-size:12px;letter-spacing:-0.19px">ValueSet</div>
<div class="t" style="left:203px;top:54px;font-size:12px;letter-spacing:-0.06px">HQ Floor 1 Lights</div>
</div>
<div class="a" style="left:988px;top:331px;width:4px;height:412px;background:#fff"></div>
<div class="a" style="left:987px;top:300px;width:1px;height:443px;background:#26a0da"></div>
<!-- h scrollbar -->
<div class="a" style="left:313px;top:679px;width:675px;height:1px;background:#26a0da"></div>
<div class="a" style="left:313px;top:705px;width:675px;height:1px;background:#26a0da"></div>
<div class="a blue" style="left:330px;top:692px;width:479px;height:9px"></div>
<div class="a" style="left:319px;top:693px;width:0;height:0;border-top:3px solid transparent;border-bottom:3px solid transparent;border-right:4px solid #26a0da"></div>
<div class="a" style="left:977px;top:693px;width:0;height:0;border-top:3px solid transparent;border-bottom:3px solid transparent;border-left:4px solid #26a0da"></div>
<!-- buttons -->
<div class="btn" style="left:319px;width:100px;letter-spacing:0.39px">Apply</div>
<div class="btn" style="left:425px;width:100px;letter-spacing:-0.26px">Refresh</div>
<div class="btn" style="left:531px;width:100px;letter-spacing:-0.25px">Close</div>
<div class="btn" style="left:637px;width:100px;letter-spacing:-0.15px">New...</div>
<div class="btn" style="left:743px;width:100px;letter-spacing:0.06px">Apply &amp; Close</div>
<div class="a" style="left:958px;top:713px;width:22px;height:22px;border-radius:11px;background:#4a80bd;color:#fff;font-weight:bold;font-size:18px;line-height:23px;text-align:center">?</div>
<!--/MID-->
<!--RIGHT-->
<!-- DATA BROWSER -->
<div class="a" style="left:992px;top:173px;width:233px;height:549px;border:1px solid #d0d0d0;border-top:none"></div>
<div class="t" style="left:995px;top:182px;font-size:12px;letter-spacing:-0.44px">Search:</div>
<div class="inp" style="left:1034px;top:175px;width:111px;height:26px;border-color:#d0d0d0"></div>
<div class="a" style="left:1129px;top:176px;width:1px;height:24px;background:#d0d0d0"></div>
<div class="a" style="left:1134px;top:186px;width:0;height:0;border-left:3.5px solid transparent;border-right:3.5px solid transparent;border-top:4px solid #6b6b6b"></div>
<div class="inp" style="left:1146px;top:175px;width:38px;height:26px;border-color:#d0d0d0"></div>
<div class="inp" style="left:1185px;top:175px;width:38px;height:26px;border-color:#e6e6e6"></div>
<svg class="a" style="left:1157px;top:180px" width="16" height="16" viewBox="0 0 16 16"><circle cx="10.200" cy="5.800" r="4" fill="none" stroke="#4a7fc0" stroke-width="2.200"/><path d="M7 9L2.500 13.300" stroke="#4a7fc0" stroke-width="3" stroke-linecap="round"/></svg>
<svg class="a" style="left:1196px;top:180px" width="16" height="16" viewBox="0 0 16 16"><path d="M2 4.300H13.500M10.300 1.200L14 4.300L10.300 7.400M14 11.400H2.500M5.700 8.300L2 11.400L5.700 14.500" stroke="#c5d9ee" stroke-width="1.800" fill="none"/></svg>
<div class="inp" style="left:995px;top:202px;width:189px;height:26px;border-color:#d0d0d0"></div>
<div class="inp" style="left:1185px;top:202px;width:38px;height:26px;border-color:#d0d0d0"></div>
<svg class="a" style="left:1197px;top:209px" width="14" height="13" viewBox="0 0 14 13"><path d="M0 0H14L8.200 5.500V12.500H5.800V5.500Z" fill="#787878"/></svg>
<div class="a" style="left:1002px;top:211px;width:0;height:0;border-top:3px solid transparent;border-bottom:3px solid transparent;border-left:3.5px solid #6b6b6b"></div>
<svg class="a" style="left:1016px;top:208px" width="14" height="14" viewBox="0 0 14 14"><use href="#i-star"/></svg>
<div class="t" style="left:1035px;top:209px;font-size:12px;letter-spacing:-0.29px">Favorites</div>
<div class="a" style="left:995px;top:229px;width:227px;height:436px;border:1px solid #d0d0d0"></div>
<div class="a" style="left:1018px;top:231px;width:202px;height:26px;background:#d4d2d3"></div>
<svg class="a" style="left:1027px;top:237px" width="14" height="14" viewBox="0 0 14 14"><use href="#i-star"/></svg>
<div class="t" style="left:1047px;top:238px;font-size:12px;letter-spacing:-0.31px">Favorites</div>
<div class="ex" style="left:1004px;top:264.500px"></div>
<svg class="a" style="left:1026px;top:264px" width="16" height="16" viewBox="0 0 16 16"><use href="#i-mycomp"/></svg>
<div class="t" style="left:1047px;top:264px;font-size:12px;letter-spacing:0.14px">My Computer</div>
<div class="ex" style="left:1004px;top:290.500px"></div>
<svg class="a" style="left:1026px;top:289px" width="16" height="16" viewBox="0 0 16 16"><use href="#i-network"/></svg>
<div class="t" style="left:1047px;top:290px;font-size:12px;letter-spacing:0.05px">Networks</div>
<div class="t" style="left:997px;top:675px;font-size:11px;letter-spacing:-0.45px">EPS:</div>
<div class="inp" style="left:1035px;top:671px;width:143px;height:23px;border-color:#e0e0e0;border-right:none"></div>
<div class="a" style="left:1173px;top:681px;width:0;height:0;border-left:4px solid transparent;border-bottom:4px solid #d0d0d0"></div>
<div class="inp" style="left:1183px;top:670px;width:38px;height:25px;border-color:#d0d0d0"></div>
<div class="a" style="left:1195px;top:677px;width:14px;height:12px;border:1px solid #6b6b6b;background:#fff"></div>
<div class="a" style="left:1205px;top:679px;width:2px;height:8px;background:#e8bf6a"></div>
<div class="a" style="left:994px;top:697px;width:230px;height:23px;background:#efeded"></div>
<div class="a blue" style="left:992px;top:722px;width:82px;height:21px"></div>
<div class="t" style="left:998px;top:726px;font-size:12px;color:#fff;letter-spacing:-0.2px">Data Browser</div>
<div class="t" style="left:1080px;top:726px;font-size:12px;letter-spacing:-0.45px">Recent Tasks</div>
<div class="a" style="left:7px;top:744px;width:1220px;height:1px;background:#d4d4d4"></div>
<svg class="a" style="left:1122px;top:748px" width="14" height="17" viewBox="0 0 14 17"><path d="M3 8V5a4 4 0 0 1 8 0V8" stroke="#e8c57a" stroke-width="1.6" fill="none"/><rect x="0.500" y="7.500" width="13" height="9" fill="#e8c57a"/></svg>
<!--/RIGHT-->
<!-- STATUS BAR -->
<div class="t" style="left:13px;top:749px;font-size:12px;letter-spacing:0.02px">"Building Floor 1 Lights" is currently selected - 3 items available in the grid - No Task Running - Audit log disabled</div>
<div class="t" style="left:1143px;top:749px;font-size:12px;letter-spacing:0.12px">Not Logged In</div>

</div></div>
</body>
</html>
